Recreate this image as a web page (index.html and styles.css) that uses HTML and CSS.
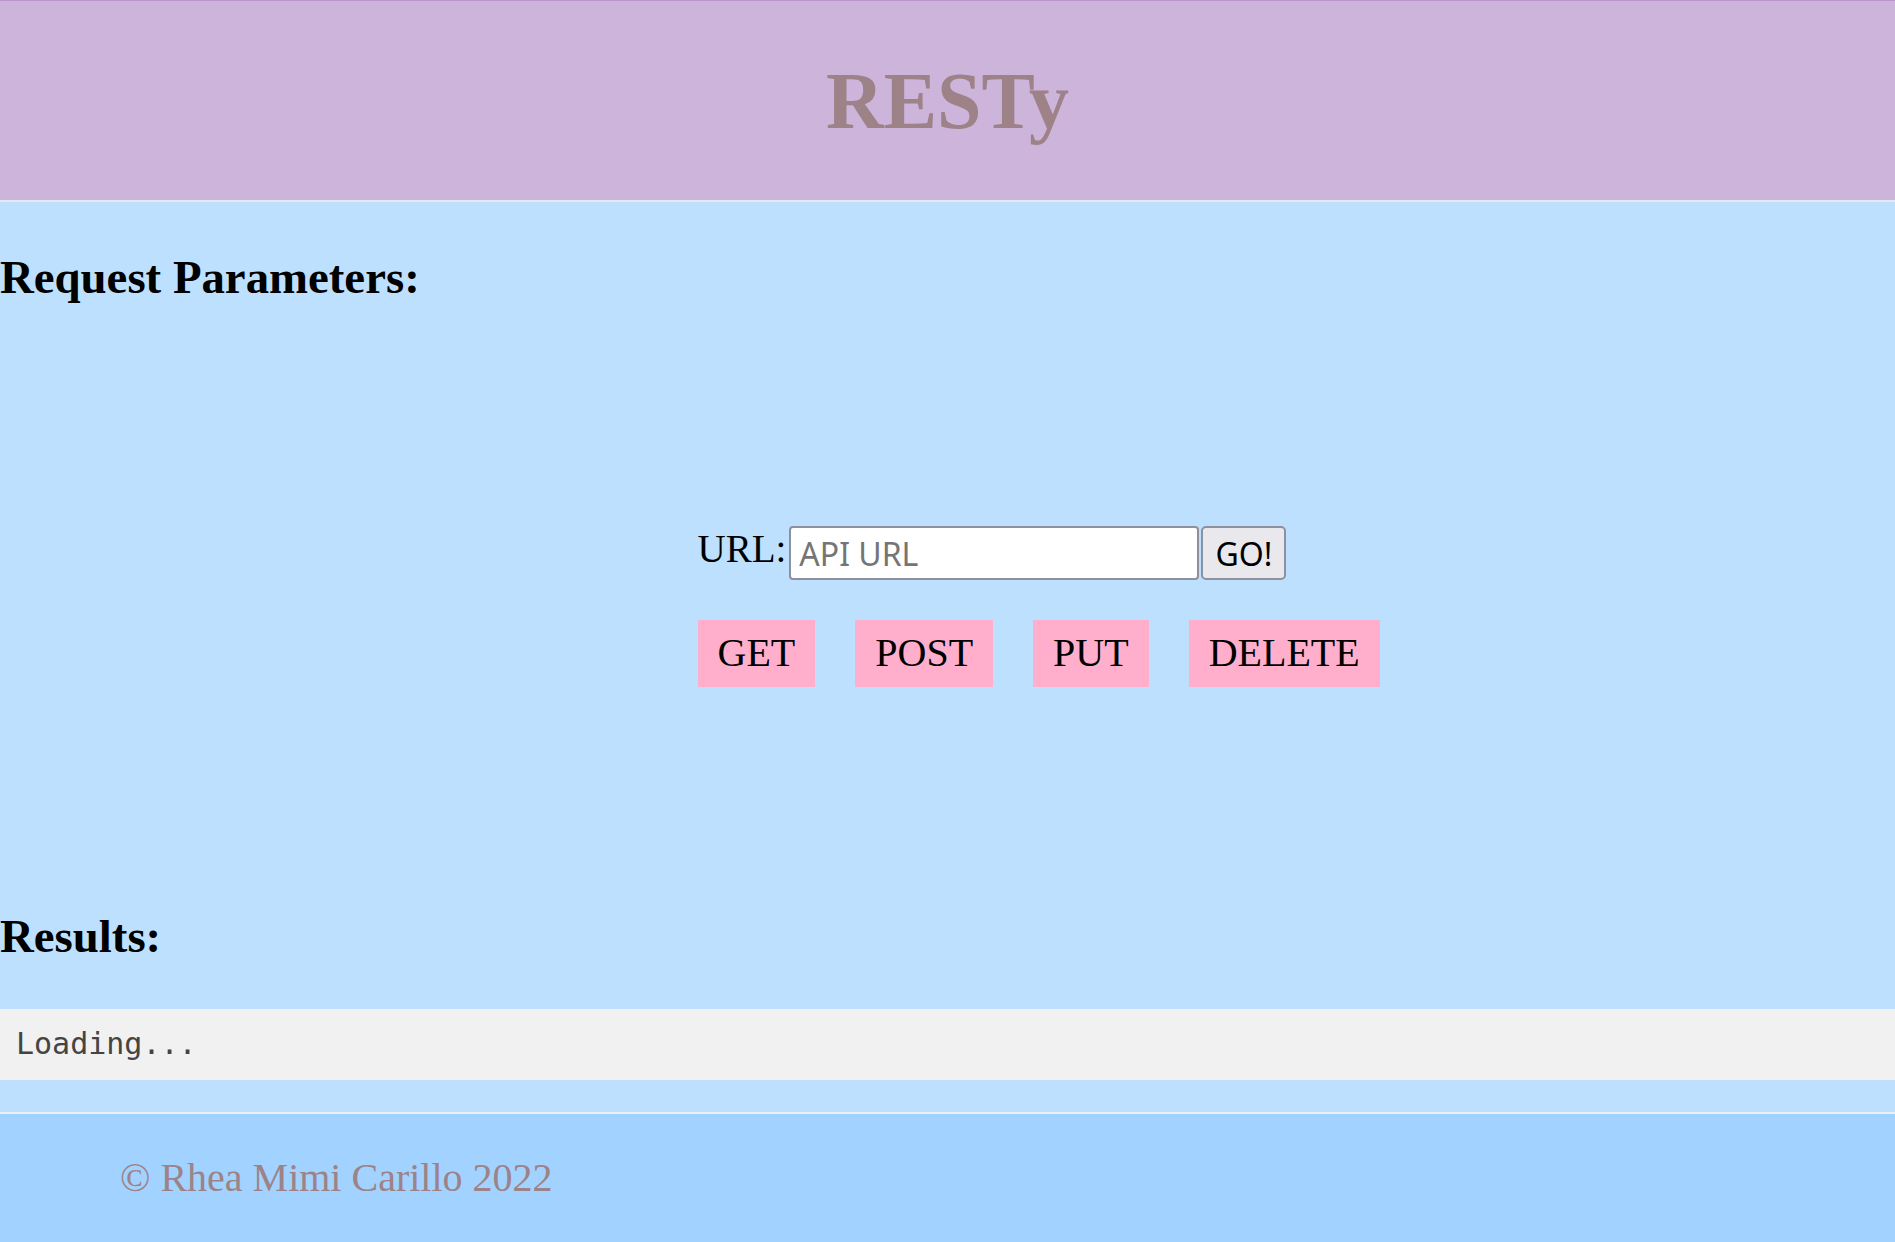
FILE: index.html
```html
<!DOCTYPE html>
<html lang="en">
<head>
<meta charset="utf-8">
<title>RESTy</title>
<link rel="stylesheet" href="styles.css">
</head>
<body>
<header class="site-header">
  <h1 class="site-title">RESTy</h1>
</header>
<main class="main">
  <h2 class="section-title section-title--params">Request Parameters:</h2>
  <form class="request-form">
    <div class="url-row">
      <label class="url-label" for="url">URL:</label>
      <input class="url-input" id="url" type="text" placeholder="API URL">
      <button class="go-button" type="button">GO!</button>
    </div>
    <div class="methods">
      <button class="method" type="button">GET</button>
      <button class="method" type="button">POST</button>
      <button class="method" type="button">PUT</button>
      <button class="method" type="button">DELETE</button>
    </div>
  </form>
  <h2 class="section-title section-title--results">Results:</h2>
  <pre class="results">Loading...</pre>
</main>
<footer class="site-footer">
  <span class="copyright">© Rhea Mimi Carillo 2022</span>
</footer>
</body>
</html>
```
FILE: styles.css
```css
html, body {
  margin: 0;
  padding: 0;
}

body {
  background: #bde0fe;
  font-family: "Liberation Serif", "Times New Roman", serif;
  color: #000;
}

.site-header {
  box-sizing: border-box;
  height: 202px;
  background: #cdb4db;
  border-top: 1px solid #b995c8;
  border-bottom: 2px solid #e8e8f0;
  display: flex;
  align-items: center;
  justify-content: center;
}

.site-title {
  margin: 0;
  font-size: 80px;
  font-weight: bold;
  line-height: 92px;
  color: #9d8287;
}

.main {
  padding-bottom: 32px;
}

.section-title {
  margin: 0;
  font-size: 46.8px;
  font-weight: bold;
  line-height: 54px;
}

.section-title--params {
  padding-top: 48px;
}

.request-form {
  width: 500px;
  margin: 222px auto 0;
}

.url-row {
  display: flex;
  align-items: flex-start;
  gap: 2px;
  white-space: nowrap;
}

.url-row > * {
  flex: none;
}

.url-label {
  font-size: 39px;
  line-height: 46px;
}

.url-input {
  box-sizing: border-box;
  width: 410px;
  height: 54px;
  margin: 0 0 0 1px;
  padding: 3px 8px;
  border: 2px solid #8f8f9d;
  border-radius: 4px;
  background: #fff;
  font-family: "Noto Sans", "Open Sans", sans-serif;
  font-size: 32px;
  color: #000;
}

.url-input::placeholder {
  color: #757575;
  opacity: 1;
}

.go-button {
  box-sizing: border-box;
  height: 54px;
  width: 85px;
  margin: 0;
  padding: 0;
  border: 2px solid #8f8f9d;
  border-radius: 5px;
  background: #e9e9ed;
  font-family: "Noto Sans", "Open Sans", sans-serif;
  font-size: 32px;
  color: #000;
}

.methods {
  display: flex;
  gap: 40px;
  margin-top: 40px;
  white-space: nowrap;
}

.method {
  flex: none;
  margin: 0;
  padding: 10px 20px 11px;
  border: none;
  background: #ffafcc;
  font-family: "Liberation Serif", "Times New Roman", serif;
  font-size: 40px;
  line-height: 46px;
  color: #000;
}

.section-title--results {
  margin-top: 222px;
}

.results {
  margin: 46px 0 0;
  padding: 18px 16px 19px;
  background: #f1f1f1;
  font-family: "DejaVu Sans Mono", monospace;
  font-size: 30px;
  line-height: 34px;
  color: #444;
}

.site-footer {
  height: 128px;
  background: #a2d2ff;
  border-top: 2px solid #eaf0f6;
  display: flex;
  align-items: center;
  padding-left: 120px;
}

.copyright {
  font-size: 40px;
  line-height: 46px;
  color: #9d8287;
}
```
